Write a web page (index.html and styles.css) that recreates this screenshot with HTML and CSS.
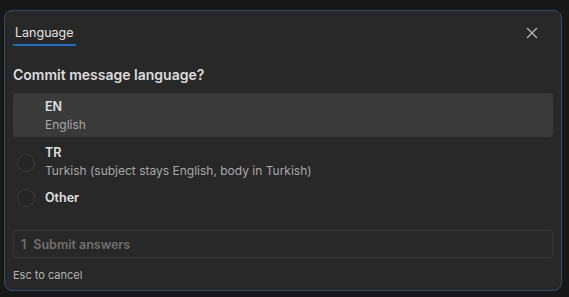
FILE: index.html
```html
<!DOCTYPE html>
<html>
<head>
<meta charset="utf-8">
<link rel="stylesheet" href="styles.css">
</head>
<body>
<div class="dialog">
  <div class="header">
    <div class="tab">Language</div>
    <button class="close" aria-label="Close">
      <svg width="12" height="12" viewBox="0 0 12 12"><path d="M1.5 1.5L10.5 10.5M10.5 1.5L1.5 10.5" stroke="#b4b4b4" stroke-width="1.4" stroke-linecap="round"/></svg>
    </button>
  </div>
  <div class="question">Commit message language?</div>
  <div class="options">
    <div class="option active">
      <div class="radio hidden"></div>
      <div class="labels">
        <div class="title">EN</div>
        <div class="desc">English</div>
      </div>
    </div>
    <div class="option">
      <div class="radio"></div>
      <div class="labels">
        <div class="title">TR</div>
        <div class="desc">Turkish (subject stays English, body in Turkish)</div>
      </div>
    </div>
    <div class="option single">
      <div class="radio"></div>
      <div class="labels">
        <div class="title">Other</div>
      </div>
    </div>
  </div>
  <div class="submit"><span class="num">1</span><span>Submit answers</span></div>
  <div class="hint">Esc to cancel</div>
</div>
</body>
</html>
```
FILE: styles.css
```css
html, body {
  margin: 0;
  padding: 0;
  background: #181818;
  font-family: Inter, "Noto Sans", sans-serif;
  -webkit-font-smoothing: antialiased;
}
body {
  padding: 10px 7px 6px 4px;
}
.dialog {
  box-sizing: border-box;
  width: 558px;
  height: 281px;
  background: #282828;
  border: 1px solid #2c4c6b;
  border-radius: 8px;
  padding: 0 8px;
  display: flex;
  flex-direction: column;
}
.header {
  display: flex;
  justify-content: space-between;
  align-items: flex-start;
  height: 34px;
}
.tab {
  margin-top: 14px;
  padding: 0 2px 4px 2px;
  font-size: 12.5px;
  color: #e2e2e2;
  border-bottom: 2px solid #1b6fc2;
  line-height: 15px;
}
.close {
  background: none;
  border: 0;
  padding: 0;
  margin: 16px 15px 0 0;
  width: 12px;
  height: 12px;
  display: flex;
}
.question {
  margin-top: 21px;
  font-size: 14px;
  font-weight: 600;
  color: #dcdcdc;
  line-height: 17px;
}
.options {
  margin-top: 10px;
  display: flex;
  flex-direction: column;
}
.option {
  display: flex;
  align-items: center;
  height: 44px;
  border-radius: 4px;
  padding-left: 4px;
  gap: 10px;
}
.option.active {
  background: #393a39;
}
.option + .option {
  height: 47px;
}
.option.single {
  height: 28px;
  align-items: center;
}
.radio {
  box-sizing: border-box;
  width: 18px;
  height: 18px;
  border-radius: 50%;
  border: 1px solid #3b3b3b;
  background: #262626;
  flex: none;
  margin-top: 5px;
}
.option.single .radio {
  margin-top: 0;
}
.radio.hidden {
  visibility: hidden;
}
.labels {
  display: flex;
  flex-direction: column;
  gap: 2px;
  padding-top: 2px;
}
.option.single .labels {
  padding-top: 0;
}
.title {
  font-size: 12.5px;
  font-weight: 600;
  color: #e0e0e0;
  line-height: 16px;
}
.desc {
  font-size: 12px;
  color: #a9a9a9;
  line-height: 16px;
}
.submit {
  box-sizing: border-box;
  margin-top: 18px;
  height: 28px;
  border: 1px solid #363636;
  border-radius: 3px;
  display: flex;
  align-items: center;
  padding-left: 7px;
  gap: 7px;
  font-size: 12.5px;
  font-weight: 600;
  color: #6f6f6f;
}
.hint {
  margin-top: 10px;
  font-size: 11px;
  color: #b5b5b5;
  line-height: 14px;
}
```
